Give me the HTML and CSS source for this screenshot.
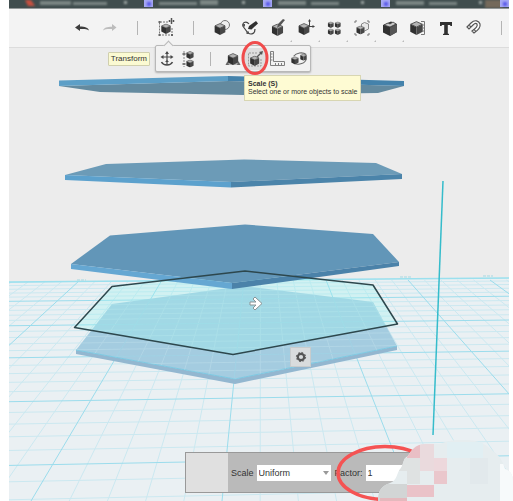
FILE: index.html
```
<!DOCTYPE html>
<html lang="en">
<head>
<meta charset="utf-8">
<title>3D Editor</title>
<link rel="stylesheet" href="styles.css">
</head>
<body>
<svg class="symbols" aria-hidden="true">
  <symbol id="cube" viewBox="0 0 12 13">
    <path d="M6 .6 11.400 3 6 5.600.6 3Z" fill="#b4b4b4" stroke="#444" stroke-width=".8"/>
    <path d="M.2 3 6 5.700V13L.2 10Z" fill="#303030"/>
    <path d="M11.800 3 6 5.700V13l5.800-3Z" fill="#474747"/>
  </symbol>
</svg>
<div class="app">
  <div class="browser-strip" aria-hidden="true">
    <svg viewBox="0 0 500 9" preserveAspectRatio="xMinYMin slice">
      <g class="soft">
        <path d="M16 0h6l4 6h-7Z" fill="#c65040"/>
        <g fill="#7c8785"><path d="M31 1h31v4H31ZM64 2h34v3H64Z"/><path d="M150 2h38v3h-38ZM191 0h18v5h-18Z"/><path d="M269 1h28v4h-28ZM302 2h28v3h-28Z"/><path d="M387 1h28v4h-28ZM420 2h28v3h-28Z"/></g>
        <g fill="#a0a8a6"><path d="M115 1h3v3h-3ZM233 1h3v3h-3ZM352 1h3v3h-3ZM470 1h3v3h-3Z"/></g>
        <path d="M476 0h18v8h-18Z" fill="#74695b"/>
      </g>
      <g fill="#a6a8f4"><path d="M135 0h9v7h-9ZM254 0h9v7h-9ZM372 0h9v7h-9ZM491 0h9v7h-9Z"/></g>
      <g fill="#5757e8" class="soft"><path d="M138 2h4v4h-4ZM257 2h4v4h-4ZM375 2h4v4h-4ZM494 2h4v4h-4Z"/></g>
    </svg>
  </div>

  <header class="toolbar">
    <button class="tool" aria-label="Undo"><svg viewBox="0 0 20 20"><path d="M3 9.500 8 6v2.500c5 0 8 1 9 4-2-1.500-5-1.800-9-1.500V13Z" fill="#3d3d3d"/></svg></button>
    <button class="tool" aria-label="Redo"><svg viewBox="0 0 20 20"><path d="M16.500 9.500 12 6v2.800c-5 0-8 1-9 3.700 2-1.500 5-1.800 9-1.500v2Z" fill="#bcbcbc"/></svg></button>
    <span class="divider"></span>
    <div class="tool-slot">
      <button class="tool" aria-label="Transform"><svg viewBox="0 0 20 20"><path d="M12 4H3.500v13H16V9" fill="none" stroke="#777" stroke-dasharray="2 1"/><path d="M2.500 3h2v2h-2ZM2.500 16h2v2h-2ZM15 16h2v2h-2Z" fill="#666"/><use href="#cube" x="5" y="5.500" width="10" height="10.500"/><path d="M15.500 0v6M12.500 3h6M14.500 1h2M14.500 5h2M13.500 2v2M17.500 2v2" stroke="#555" fill="none"/></svg></button>
      <nav class="submenu" aria-label="Transform">
        <span class="group-label">Transform</span>
        <button class="subtool" aria-label="Move"><svg viewBox="0 0 18 18"><path d="M9 2v13M5 7h8" stroke="#484848" stroke-width="1.200"/><path d="m9 1 2 3H7ZM9 10l2 2H7ZM2.500 7l3-2v4ZM15.500 7l-3-2v4Z" fill="#484848"/><path d="M3.500 12c2 4 9 4 11 0" fill="none" stroke="#484848" stroke-width="1.500"/></svg></button>
        <button class="subtool" aria-label="Align"><svg viewBox="0 0 18 18"><path d="M4 1v16" stroke="#888" stroke-dasharray="2 1"/><path d="M2.500 3h3v2h-3ZM2.500 13h3v2h-3Z" fill="#777"/><use href="#cube" x="6" y="1" width="8" height="8"/><use href="#cube" x="6" y="9.500" width="8" height="8"/></svg></button>
        <span class="divider sub-divider"></span>
        <button class="subtool" aria-label="Smart scale"><svg viewBox="0 0 18 18"><path d="m9 7 6 7H3Z" fill="none" stroke="#777"/><path d="m1.500 15 2-4 1.500 4ZM16.500 15l-2-4-1.500 4Z" fill="#666"/><use href="#cube" x="3.500" y="3" width="11" height="12"/></svg></button>
        <div class="scale-slot">
          <button class="subtool active" aria-label="Scale"><svg viewBox="0 0 18 18"><path d="M11 3H2.500v13H15V8" fill="none" stroke="#999" stroke-dasharray="2 1"/><use href="#cube" x="4" y="5.500" width="9.500" height="10.500"/><path d="m11 7 4-4" stroke="#555" stroke-width="1.200"/><path d="m17 1-1 4-3-3Z" fill="#555"/></svg></button>
          <svg class="ring" viewBox="0 0 28 36" aria-hidden="true"><ellipse cx="14" cy="18" rx="12" ry="15.500" fill="none" stroke="#f04c4c" stroke-width="3"/></svg>
          <div class="tooltip" role="tooltip"><strong>Scale (S)</strong><span>Select one or more objects to scale</span></div>
        </div>
        <button class="subtool" aria-label="Ruler"><svg viewBox="0 0 18 18"><path d="M2.500 1.500h3v10h11v4h-14ZM3 4h1.500M3 7h1.500M3 10h1.500M7.500 13v2M10.500 13v2M13.500 13v2" fill="none" stroke="#808080"/></svg></button>
        <button class="subtool" aria-label="Snap"><svg viewBox="0 0 20 18"><path d="M4 6c3-4 10-5 14-2M18 9c-1 5-8 7-13 5" fill="none" stroke="#666" stroke-width="1.200"/><use href="#cube" x="1" y="6" width="9" height="9"/><use href="#cube" x="11" y="3" width="8" height="8"/></svg></button>
      </nav>
    </div>
    <span class="divider"></span>
    <button class="tool" aria-label="Primitives"><svg viewBox="0 0 20 20"><circle cx="13" cy="7" r="4.500" fill="#eee" stroke="#777"/><use href="#cube" x="2" y="5" width="12" height="12"/></svg></button>
    <button class="tool" aria-label="Sketch"><svg viewBox="0 0 20 20"><path d="M9 6C6 2 1 5 3.500 9L8 15c3 2 7 1 7-4" fill="none" stroke="#444" stroke-width="1.200"/><path d="m8 11 1-3 7-5 2 2.500-6.500 6Z" fill="#303030"/><path d="M2.500 6h2.500v2.500H2.500ZM6.500 13.500h2.500V16H6.500Z" fill="#555"/></svg></button>
    <button class="tool menu" aria-label="Construct"><svg viewBox="0 0 20 20"><use href="#cube" x="3.500" y="5.500" width="12" height="12.500"/><path d="m9 10 1-4 5-5 2 1-5 6Z" fill="#555"/></svg></button>
    <button class="tool menu" aria-label="Modify"><svg viewBox="0 0 20 20"><use href="#cube" x="2" y="5" width="12" height="12"/><path d="M13.500 8V3M13 8.500h4" stroke="#444"/><path d="m13.500 1 1.500 2.500h-3ZM19 8.500l-2.500-1.500v3Z" fill="#444"/></svg></button>
    <button class="tool menu" aria-label="Pattern"><svg viewBox="0 0 20 20"><use href="#cube" x="3.500" y="3.500" width="6.500" height="6.500"/><use href="#cube" x="10.500" y="3.500" width="6.500" height="6.500"/><use href="#cube" x="3.500" y="10.500" width="6.500" height="6.500"/><use href="#cube" x="10.500" y="10.500" width="6.500" height="6.500"/></svg></button>
    <button class="tool menu" aria-label="Grouping"><svg viewBox="0 0 20 20"><path d="M3 5V3h2M15 3h2v2M3 15v2h2M15 17h2v-2" fill="none" stroke="#777"/><path d="m12.500 4.500 4 1.500v5l-4 2-3-1.500V6Z" fill="#e8e8e8" stroke="#888"/><use href="#cube" x="4" y="7.500" width="9" height="9"/></svg></button>
    <button class="tool menu" aria-label="Combine"><svg viewBox="0 0 20 20"><path d="m3 7 8-3.500 6 2.500v8l-7 4-7-3.500Z" fill="#303030"/><path d="m10 9.500 7-3.500v8l-7 4Z" fill="#555"/><path d="m4 7 4-2 2 1 3-2 3 2-6 3Z" fill="#c8c8c8" stroke="#444" stroke-width=".8"/></svg></button>
    <button class="tool" aria-label="Measure"><svg viewBox="0 0 20 20"><use href="#cube" x="2" y="3" width="13" height="14"/><path d="M13 3.500h3.500v13H13M14 7h2M14 10h2M14 13h2" fill="none" stroke="#777"/></svg></button>
    <button class="tool" aria-label="Text"><svg viewBox="0 0 20 20"><path d="M4 4h12v4h-1.500l-.5-1h-2.200v8.500l1.200.5v1H7v-1l1.200-.5V7H6l-.5 1H4Z" fill="#303030"/></svg></button>
    <button class="tool" aria-label="Magnet"><svg viewBox="0 0 20 20"><path d="m3 9 4-4c4-4 8-2 9 1 1 4-3 7-6 9l-2-2c3-2 6-5 5-7-1-1-3 0-4 1l-4 4ZM5 7l2 2M10 11l2 3" fill="#fff" stroke="#555" stroke-width="1.200"/></svg></button>
    <span class="divider"></span>
  </header>

  <main class="workspace">
    <svg class="scene" viewBox="9 48 500 453" preserveAspectRatio="xMidYMin slice" role="img" aria-label="Stacked hexagonal plates above the work plane">
      <defs>
        <clipPath id="floor-clip"><path d="M9 282 509 278V501H9Z"/></clipPath>
        <clipPath id="base-clip"><path d="M76 350 112 304 243 286 373 302 397 346 235 379Z"/></clipPath>
        <g id="grid"><path class="minor" id="minor"/><path class="major" id="major"/></g>
      </defs>
      <path d="M9 282 509 278V501H9Z" fill="#eaf0f3"/>
      <g clip-path="url(#floor-clip)"><use href="#grid"/></g>
      <path d="M9 282 509 278" stroke="#9be0ee" stroke-width="1.500"/>
      <path d="M77 280h9M400 277h12M483 276h10" stroke="#a5d9e3" stroke-dasharray="3 1"/>

      <path d="M76 350V354L235 384 397 350V346L235 379Z" fill="#93b7d0"/>
      <path d="M76 350 112 304 243 286 373 302 397 346 235 379Z" fill="#a4cce0"/>
      <path d="M76 350 235 379 397 346" fill="none" stroke="#7dc9e2"/>
      <g clip-path="url(#base-clip)" opacity=".35"><use href="#grid"/></g>
      <path d="M74.500 327.500 112 286.500 245 271 373 285 397.500 324 233 354.500Z" fill="#9cf2f0" opacity=".32"/>

      <path d="M59 86 228 81 404 86 378 93 243 95 100 92Z" fill="#648a9f"/>
      <path d="M59 80.500 228 76V81L59 86Z" fill="#5d9fc7"/>
      <path d="M228 76 404 81V86L228 81Z" fill="#4482ab"/>

      <path d="M65 175 106 164 244 159.500 376 163 402 174 231 182Z" fill="#6c9bb7"/>
      <path d="M65 175 231 182V187.500L65 180Z" fill="#5ca1cd"/>
      <path d="M231 182 402 174V179L231 187.500Z" fill="#4b84aa"/>

      <path d="M71 264 110 235.500 245 224.500 373 234 399 262 232 283Z" fill="#6296b8"/>
      <path d="M71 264 232 283V289L71 269Z" fill="#65a7d2"/>
      <path d="M232 283 399 262V266L232 289Z" fill="#4b82a9"/>

      <path d="M74.500 327.500 112 286.500 245 271 373 285 397.500 324 233 354.500Z" fill="none" stroke="#2d474d" stroke-width="1.500" stroke-linejoin="round"/>
      <path d="M443 181 433 435" stroke="#35bccb" stroke-width="1.500"/>
      <path d="M250 302h6l-3-3 2-2 7 6.500-7 6.500-2-2 3-3h-6Z" fill="#fff" stroke="#8a9496"/>
    </svg>

    <button class="gear" aria-label="Object settings"><svg viewBox="0 0 12 12"><circle cx="6" cy="6" r="3.200" fill="none" stroke="#555" stroke-width="2.200"/><circle cx="6" cy="6" r="4.600" fill="none" stroke="#555" stroke-width="1" stroke-dasharray="1.800 1.800"/></svg></button>

    <form class="scale-panel">
      <div class="panel-handle"></div>
      <label for="mode">Scale</label>
      <div class="select-wrap"><select id="mode"><option>Uniform</option><option>Non Uniform</option></select></div>
      <label class="factor-label" for="factor">Factor:</label>
      <input id="factor" type="text" value="1">
      <svg class="overlay" viewBox="333 440 180 61" aria-hidden="true">
        <defs><clipPath id="cloud"><path d="M378 501c0-10 3-15 12-18 8-3 6-10 11-15 3-5 2-10 7-12 3-5 7-12 17-12h15c10-5 35-7 47 2 9 8 14 9 18 23 6 2 8 7 8 12v20Z"/></clipPath></defs>
        <ellipse cx="385" cy="473" rx="47" ry="26.500" fill="none" stroke="#f55353" stroke-width="3.500"/>
        <g clip-path="url(#cloud)">
          <path d="M370 440h143v61H370Z" fill="#e6edef"/>
          <path d="M500 464h13v37h-13Z" fill="#f7fafb"/>
          <path d="M447 442h36v16h-36Z" fill="#e1eff3"/>
          <path d="M470 458h18v26h-18Z" fill="#e2e9ec"/>
          <path d="M394 458h26v13h-26ZM407 471h13v13h-13Z" fill="#dfe2e2"/>
          <path d="M378 484h29v17h-29Z" fill="#d2d5d5"/>
          <path d="M407 444h13v14h-13Z" fill="#e9bfc5"/>
          <path d="M420 444h14v27h-14Z" fill="#eadadd"/>
          <path d="M434 458h13v13h-13Z" fill="#edd8dc"/>
          <path d="M434 471h13v13h-13Z" fill="#eac7cc"/>
          <path d="M407 485h27v12h-27Z" fill="#eac2c8"/>
          <path d="M380 498h27v3h-27Z" fill="#e4b9bd"/>
        </g>
      </svg>
    </form>
  </main>
</div>
<script src="grid.js"></script>
</body>
</html>
```

FILE: styles.css
```
* { box-sizing: border-box; }

body {
  margin: 0;
  background: #fff;
  color: #333;
  font-family: "Liberation Sans", Arial, sans-serif;
  font-size: 9px;
  line-height: 12px;
}

button {
  padding: 0;
  border: 0;
  background: none;
}

.symbols { position: absolute; width: 0; height: 0; }

.app {
  display: flex;
  flex-direction: column;
  min-height: 100vh;
  margin: 0 4px 0 9px;
}

.browser-strip {
  height: 9px;
  background: #404d4e;
  border-bottom: 1px solid #929798;
}
.browser-strip svg { display: block; width: 100%; height: 8px; }
.soft { filter: blur(1px); }

.toolbar {
  display: flex;
  align-items: center;
  height: 39px;
  padding-left: 59px;
  background: #f3f3f3;
  border-bottom: 1px solid #dcdcdc;
}

.tool, .tool-slot { width: 28px; height: 28px; flex: none; }
.tool { display: grid; place-items: center; position: relative; }
.tool svg { width: 20px; height: 20px; }
.tool-slot { position: relative; z-index: 2; }

.menu::after {
  content: "";
  position: absolute;
  right: 0;
  bottom: 0;
  border: 1px solid transparent;
  border-right-color: #bbb;
  border-bottom-color: #bbb;
}

.divider {
  flex: none;
  width: 1px;
  height: 14px;
  margin: 0 14px 0 13px;
  background: #b4b4b4;
}
.toolbar > .divider:last-child { margin-right: 0; }

.submenu {
  position: absolute;
  top: 31px;
  left: 3px;
  display: flex;
  align-items: center;
  height: 27px;
  background: #f2f2f2;
  border: 1px solid #b8b8b8;
  border-radius: 2px;
  box-shadow: 0 1px 2px rgba(0, 0, 0, .25);
}
.submenu::before {
  content: "";
  position: absolute;
  top: -4px;
  left: 9px;
  width: 6px;
  height: 6px;
  background: #f2f2f2;
  border: solid #b8b8b8;
  border-width: 1px 0 0 1px;
  transform: rotate(45deg);
}

.group-label {
  position: absolute;
  right: 100%;
  margin-right: 6px;
  padding: 0 2px;
  background: #fbfad2;
  border: 1px solid #d0cfae;
  border-radius: 1px;
  font-size: 8px;
}

.subtool { display: grid; place-items: center; width: 22px; height: 22px; }
.subtool svg { width: 18px; height: 18px; }
.subtool.active { background: #dedede; }
.sub-divider { margin: 0 11px 0 10px; }

.scale-slot { position: relative; }
.ring {
  position: absolute;
  top: -8px;
  left: -3px;
  width: 28px;
  height: 36px;
}

.tooltip {
  position: absolute;
  top: 27px;
  left: 0;
  display: grid;
  padding: 4px 3px;
  background: #fefbd3;
  border: 1px solid #d8d6b2;
  font-size: 7px;
  line-height: 8px;
  white-space: nowrap;
}

.workspace {
  position: relative;
  flex: 1;
  display: flex;
  flex-direction: column;
  justify-content: flex-end;
  padding: 0 0 8px 176px;
  background: #ececec;
}
.scene { position: absolute; inset: 0; width: 100%; height: 100%; }

.gear {
  position: absolute;
  top: 299px;
  left: 281px;
  display: grid;
  place-items: center;
  width: 21px;
  height: 20px;
  background: #d9dcdd;
  border: 1px solid #c8cccd;
}
.gear svg { width: 12px; height: 12px; }

.scale-panel {
  position: relative;
  display: flex;
  align-items: center;
  width: 240px;
  height: 41px;
  background: #bababa;
  border: 1px solid #999;
}
.panel-handle {
  align-self: stretch;
  width: 42px;
  margin-right: 3px;
  background: #e0e0e0;
}

.select-wrap { position: relative; margin-left: 3px; }
.select-wrap::after {
  content: "";
  position: absolute;
  top: 6px;
  right: 2px;
  border: 3px solid transparent;
  border-top: 4px solid #999;
  border-bottom: 0;
}
select, input {
  display: block;
  height: 16px;
  padding: 0 2px;
  border: 0;
  border-radius: 0;
  background: #fff;
  color: #333;
  font: inherit;
  appearance: none;
}
select { width: 74px; }
input { width: 36px; }
.factor-label { margin: 0 3px 0 4px; }

.overlay {
  position: absolute;
  top: -13px;
  left: 147px;
  width: 180px;
  height: 61px;
  pointer-events: none;
}

.minor, .major { fill: none; }
.minor { stroke: #cbe8f0; stroke-width: 1; }
.major { stroke: #9bdcec; stroke-width: 1; }
```

FILE: grid.js
```
// Work plane grid: lines converge above the scene, every fifth one is heavy.
const paths = { minor: "", major: "" };
const add = (i, d) => { paths[i % 5 === 0 ? "major" : "minor"] += d; };

for (let i = -25; i <= 50; i++) {
  add(i, `M${80 + 16.4 * i} 280L${-160 + 38.2 * i} 501`);
}
for (let i = 0; i <= 28; i++) {
  const depth = 1 / (0.00617 - 0.000131 * i);
  const y = 120 + depth;
  add(i, `M9 ${y}L509 ${y - depth * 0.028}`);
}

document.getElementById("minor").setAttribute("d", paths.minor);
document.getElementById("major").setAttribute("d", paths.major);
```
